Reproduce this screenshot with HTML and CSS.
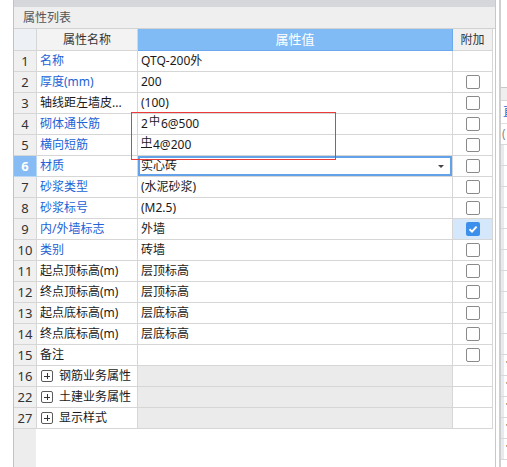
FILE: index.html
```html
<!DOCTYPE html>
<html lang="zh-CN">
<head>
<meta charset="utf-8">
<title>属性列表</title>
<link rel="stylesheet" href="styles.css">
</head>
<body>
<div class="screen">
  <div class="left-strip"></div>
  <div class="panel">
    <div class="topbar"></div>
    <div class="title">属性列表</div>
    <div class="grid">
      <div class="row head">
        <div class="c num"></div>
        <div class="c name">属性名称</div>
        <div class="c val">属性值</div>
        <div class="c add">附加</div>
      </div>
      <div class="row"><div class="c num">1</div><div class="c name blue">名称</div><div class="c val">QTQ-200外</div><div class="c add"></div></div>
      <div class="row"><div class="c num">2</div><div class="c name blue">厚度(mm)</div><div class="c val">200</div><div class="c add"><span class="cb"></span></div></div>
      <div class="row"><div class="c num">3</div><div class="c name">轴线距左墙皮...</div><div class="c val">(100)</div><div class="c add"><span class="cb"></span></div></div>
      <div class="row"><div class="c num">4</div><div class="c name blue">砌体通长筋</div><div class="c val">2<span class="rebar">中</span>6@500</div><div class="c add"><span class="cb"></span></div></div>
      <div class="row"><div class="c num">5</div><div class="c name blue">横向短筋</div><div class="c val"><span class="rebar under">中</span>4@200</div><div class="c add"><span class="cb"></span></div></div>
      <div class="row sel"><div class="c num">6</div><div class="c name blue">材质</div><div class="c val">实心砖<span class="arrow"></span></div><div class="c add"><span class="cb"></span></div></div>
      <div class="row"><div class="c num">7</div><div class="c name blue">砂浆类型</div><div class="c val">(水泥砂浆)</div><div class="c add"><span class="cb"></span></div></div>
      <div class="row"><div class="c num">8</div><div class="c name blue">砂浆标号</div><div class="c val">(M2.5)</div><div class="c add"><span class="cb"></span></div></div>
      <div class="row"><div class="c num">9</div><div class="c name blue">内/外墙标志</div><div class="c val">外墙</div><div class="c add on"><span class="cb checked"><svg viewBox="0 0 14 14" width="14" height="14"><polyline points="3.5,7.2 6,9.6 10.6,4.6" fill="none" stroke="#fff" stroke-width="2"/></svg></span></div></div>
      <div class="row"><div class="c num">10</div><div class="c name blue">类别</div><div class="c val">砖墙</div><div class="c add"><span class="cb"></span></div></div>
      <div class="row"><div class="c num">11</div><div class="c name">起点顶标高(m)</div><div class="c val">层顶标高</div><div class="c add"><span class="cb"></span></div></div>
      <div class="row"><div class="c num">12</div><div class="c name">终点顶标高(m)</div><div class="c val">层顶标高</div><div class="c add"><span class="cb"></span></div></div>
      <div class="row"><div class="c num">13</div><div class="c name">起点底标高(m)</div><div class="c val">层底标高</div><div class="c add"><span class="cb"></span></div></div>
      <div class="row"><div class="c num">14</div><div class="c name">终点底标高(m)</div><div class="c val">层底标高</div><div class="c add"><span class="cb"></span></div></div>
      <div class="row"><div class="c num">15</div><div class="c name">备注</div><div class="c val"></div><div class="c add"><span class="cb"></span></div></div>
      <div class="row group"><div class="c num">16</div><div class="c name"><span class="plus"></span>钢筋业务属性</div><div class="c val"></div><div class="c add"></div></div>
      <div class="row group"><div class="c num">22</div><div class="c name"><span class="plus"></span>土建业务属性</div><div class="c val"></div><div class="c add"></div></div>
      <div class="row group"><div class="c num">27</div><div class="c name"><span class="plus"></span>显示样式</div><div class="c val"></div><div class="c add"></div></div>
      <div class="filler"><div class="filler-num"></div></div>
    </div>
  </div>
  <div class="gap"></div>
  <div class="sbar"></div>
  <div class="side">
    <div class="side-top"></div>
    <div class="side-strip"></div>
    <div class="side-box">直</div>
    <div class="side-row paren">(</div>
    <div class="side-row"></div>
    <div class="side-row"></div>
    <div class="side-row"></div>
    <div class="side-row"></div>
    <div class="side-row"></div>
    <div class="side-row"></div>
    <div class="side-row"></div>
    <div class="side-row"></div>
    <div class="side-row"></div>
    <div class="side-row"></div>
    <div class="side-row one">1</div>
    <div class="side-row one">1</div>
    <div class="side-row one">1</div>
    <div class="side-row one">1</div>
    <div class="side-row one">1</div>
  </div>
  <div class="annot"></div>
</div>
</body>
</html>
```

FILE: styles.css
```css
html, body {
  margin: 0;
  padding: 0;
  background: #fff;
}
body {
  font-family: "Noto Sans", "Noto Sans CJK SC", "Microsoft YaHei", sans-serif;
  font-size: 12px;
  color: #1a1a1a;
}
.screen {
  position: relative;
  display: flex;
  width: 507px;
  height: 467px;
  overflow: hidden;
}
.left-strip {
  flex: none;
  width: 13px;
  border-right: 1px solid #c2c2c2;
  background: #fff;
}
.panel {
  flex: none;
  width: 481px;
  display: flex;
  flex-direction: column;
  border-right: 1px solid #c8c8c8;
}
.topbar {
  height: 7px;
  background: #d6d7db;
}
.title {
  height: 21px;
  line-height: 21px;
  background: #efefef;
  border-bottom: 1px solid #d2d2d2;
  padding-left: 9px;
  color: #555;
  font-size: 12px;
}
.grid {
  flex: 1;
  display: flex;
  flex-direction: column;
}
.row {
  display: grid;
  grid-template-columns: 23px 101px 315px 40px;
  height: 21px;
  flex: none;
}
.row.head {
  height: 22px;
}
.c {
  box-sizing: border-box;
  border-right: 1px solid #d6d6d6;
  border-bottom: 1px solid #d6d6d6;
  line-height: 20px;
  white-space: nowrap;
  overflow: hidden;
  position: relative;
}
.head .c {
  line-height: 21px;
}
.num {
  background: #f0f0f0;
  text-align: center;
  color: #333;
  font-size: 13px;
}
.name {
  padding-left: 3px;
}
.val {
  padding-left: 3px;
}
.blue {
  color: #2262d6;
}
.head .num {
  background: #edf1f6;
}
.head .name {
  background: #f3f3f3;
  text-align: center;
  padding-left: 0;
  color: #333;
}
.head .val {
  background: #80bbf6;
  border-color: #6ba9ec;
  color: #fff;
  text-align: center;
  padding-left: 0;
  font-size: 13px;
}
.head .add {
  background: #f0f0f0;
  text-align: center;
  color: #333;
}
.add {
  display: flex;
  justify-content: center;
  align-items: center;
}
.add.on {
  background: #d4e7fb;
}
.cb {
  display: block;
  width: 14px;
  height: 14px;
  box-sizing: border-box;
  border: 1px solid #8a8a8a;
  border-radius: 2px;
  background: #fff;
}
.cb.checked {
  border: none;
  background: #3d8fec;
}
.cb svg {
  display: block;
}
.rebar {
  display: inline-block;
  font-size: 11px;
  line-height: 11px;
  vertical-align: 3px;
  margin: 0 1px;
}
.rebar.under {
  border-bottom: 1px solid #1a1a1a;
  line-height: 10px;
  margin-left: 0;
}
.sel .num {
  background: #86bcf3;
  color: #fff;
  font-weight: bold;
  border-color: #b8d6f5;
}
.sel .val {
  box-shadow: inset 0 0 0 2px #63a2e8;
}
.arrow {
  position: absolute;
  right: 8px;
  top: 9px;
  width: 0;
  height: 0;
  border-left: 3px solid transparent;
  border-right: 3px solid transparent;
  border-top: 3px solid #444;
}
.group .val {
  background: #ebebeb;
}
.group .name {
  display: flex;
  align-items: center;
  padding-left: 4px;
}
.plus {
  position: relative;
  flex: none;
  width: 12px;
  height: 12px;
  box-sizing: border-box;
  border: 1px solid #5a5a5a;
  border-radius: 2px;
  margin-right: 6px;
}
.plus::before,
.plus::after {
  content: "";
  position: absolute;
  background: #333;
}
.plus::before {
  left: 2px;
  top: 4.5px;
  width: 6px;
  height: 1px;
}
.plus::after {
  left: 4.5px;
  top: 2px;
  width: 1px;
  height: 6px;
}
.filler {
  flex: 1;
  display: flex;
}
.filler-num {
  width: 22px;
  background: #ededed;
}
.gap {
  flex: none;
  width: 3px;
  background: #fff;
}
.sbar {
  flex: none;
  width: 2px;
  background: #cfcfcf;
}
.side {
  flex: none;
  width: 6px;
  display: flex;
  flex-direction: column;
  overflow: hidden;
}
.side-top {
  height: 87px;
  flex: none;
}
.side-strip {
  height: 12px;
  flex: none;
  background: #efefef;
  border-top: 1px solid #c8c8c8;
  border-bottom: 1px solid #d8d8d8;
}
.side-box {
  height: 22px;
  flex: none;
  line-height: 22px;
  color: #2a62d6;
  padding-left: 2px;
  border-bottom: 1px solid #e0e0e0;
  white-space: nowrap;
}
.side-row {
  height: 21px;
  flex: none;
  box-sizing: border-box;
  border-bottom: 1px solid #d8d8d8;
  box-shadow: inset 3px 0 0 #e6eaf1;
  line-height: 20px;
  padding-left: 4px;
  color: #222;
  white-space: nowrap;
}
.side-row.paren {
  color: #888;
  padding-left: 1px;
  box-shadow: none;
}
.annot {
  position: absolute;
  left: 131px;
  top: 112px;
  width: 205px;
  height: 48px;
  box-sizing: border-box;
  border: 1px solid #ec3a3a;
  pointer-events: none;
}
```
